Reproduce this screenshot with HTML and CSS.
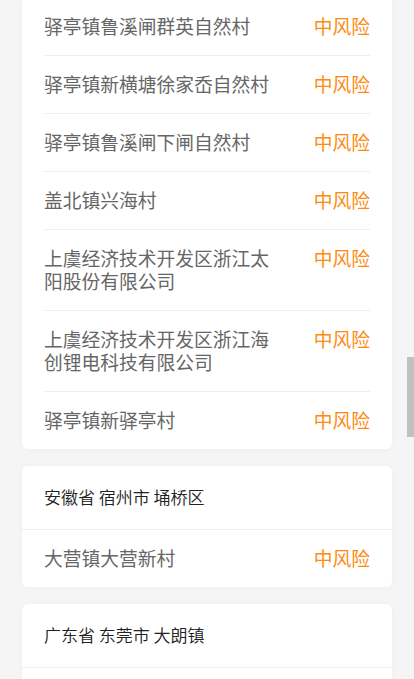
FILE: index.html
```html
<!DOCTYPE html>
<html lang="zh-CN">
<head>
  <meta charset="UTF-8">
  <meta name="viewport" content="width=device-width, initial-scale=1">
  <title>风险地区</title>
  <link rel="stylesheet" href="styles.css">
</head>
<body>
  <div class="area-list">
    <div class="area-card">
      <div class="area-row"><span class="area-name">驿亭镇鲁溪闸群英自然村</span><span class="risk">中风险</span></div>
      <div class="area-row"><span class="area-name">驿亭镇新横塘徐家岙自然村</span><span class="risk">中风险</span></div>
      <div class="area-row"><span class="area-name">驿亭镇鲁溪闸下闸自然村</span><span class="risk">中风险</span></div>
      <div class="area-row"><span class="area-name">盖北镇兴海村</span><span class="risk">中风险</span></div>
      <div class="area-row"><span class="area-name">上虞经济技术开发区浙江太阳股份有限公司</span><span class="risk">中风险</span></div>
      <div class="area-row"><span class="area-name">上虞经济技术开发区浙江海创锂电科技有限公司</span><span class="risk">中风险</span></div>
      <div class="area-row"><span class="area-name">驿亭镇新驿亭村</span><span class="risk">中风险</span></div>
    </div>

    <div class="area-card">
      <div class="area-head">安徽省 宿州市 埇桥区</div>
      <div class="area-row"><span class="area-name">大营镇大营新村</span><span class="risk">中风险</span></div>
    </div>

    <div class="area-card">
      <div class="area-head">广东省 东莞市 大朗镇</div>
      <div class="area-row"><span class="area-name">大朗镇</span><span class="risk">中风险</span></div>
    </div>
  </div>

  <div class="scroll-thumb"></div>
</body>
</html>
```

FILE: styles.css
```css
html, body { height: 100%; overflow: hidden; }
body { margin: 0; background: #f5f5f5; font-family: "Noto Sans CJK SC", "Noto Sans", sans-serif; }
.area-list { margin-top: -2px; padding: 0 22px; }
.area-card { background: #fff; border-radius: 6px; margin-bottom: 17px; box-shadow: 0 0 6px rgba(0,0,0,0.03); }
.area-list .area-card:first-child { border-radius: 0 0 6px 6px; }
.area-head { font-size: 17px; font-weight: 350; line-height: 22px; color: #222; padding: 20px 22px 21px; border-bottom: 1px solid #eee; }
.area-row { display: flex; justify-content: space-between; align-items: flex-start; margin: 0 22px; padding: 15.5px 0 18.5px; font-size: 18.75px; line-height: 23px; border-bottom: 1px solid #eee; }
.area-row:last-child { border-bottom: none; }
.area-name { color: #666; max-width: 240px; }
.risk { color: #fd8b0f; white-space: nowrap; }
.scroll-thumb { position: fixed; right: 0; top: 357px; width: 7px; height: 80px; background: #c1c1c1; }
```
